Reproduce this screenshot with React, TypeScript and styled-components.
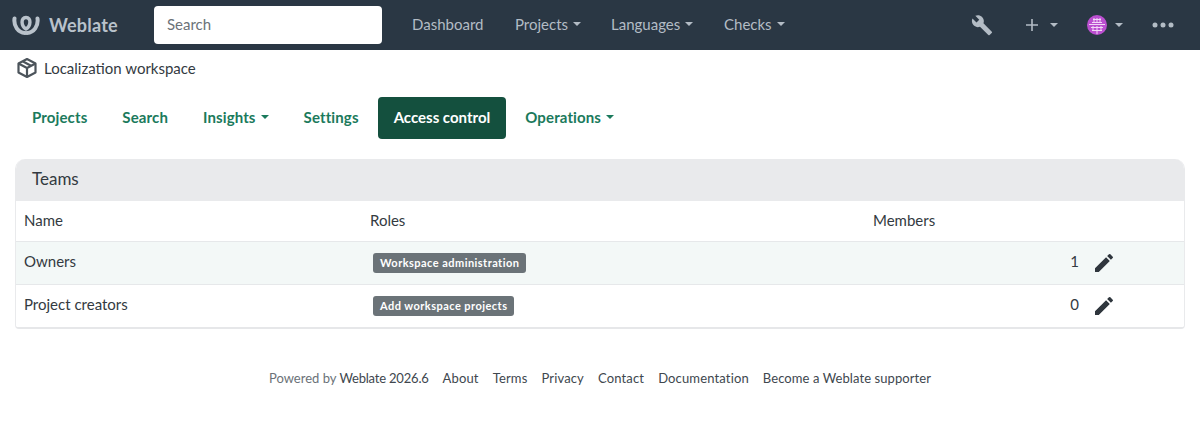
import React from "react";
import styled, { createGlobalStyle } from "styled-components";

const Global = createGlobalStyle`
  html, body { margin: 0; padding: 0; background: #fff; }
  body { font-family: Lato, "Noto Sans", "Liberation Sans", sans-serif; font-size: 15px; color: #333a41; }
`;

const Page = styled.div`
  width: 1200px;
  height: 437px;
  overflow: hidden;
`;

const Navbar = styled.nav`
  display: flex;
  align-items: center;
  height: 50px;
  background: #2a3744;
  padding: 0 26px 0 12px;
  box-sizing: border-box;
`;

const Brand = styled.div`
  display: flex;
  align-items: center;
  gap: 9px;
  width: 142px;
  color: #b9c2cb;
  font-size: 18px;
  font-weight: 700;
  letter-spacing: 0.2px;
`;

const SearchBox = styled.div`
  width: 228px;
  height: 38px;
  box-sizing: border-box;
  background: #fff;
  border-radius: 4px;
  padding: 0 13px 2px;
  display: flex;
  align-items: center;
  color: #6b7278;
  font-size: 15px;
`;

const NavLinks = styled.div`
  display: flex;
  margin-left: 30px;
`;

const NavLink = styled.span<{ $w: number }>`
  display: flex;
  align-items: center;
  gap: 5px;
  width: ${(p) => p.$w}px;
  padding-bottom: 2px;
  color: #b3bcc5;
  font-size: 15px;
`;

const Caret = styled.i<{ $c?: string }>`
  display: inline-block;
  width: 0;
  height: 0;
  border-left: 4px solid transparent;
  border-right: 4px solid transparent;
  border-top: 4px solid ${(p) => p.$c || "#b3bcc5"};
`;

const NavRight = styled.div`
  margin-left: auto;
  display: flex;
  align-items: center;
  color: #b3bcc5;
`;

const IconSlot = styled.span<{ $w: number; $gap?: number }>`
  display: flex;
  align-items: center;
  gap: ${(p) => p.$gap ?? 8}px;
  width: ${(p) => p.$w}px;
`;

const Crumb = styled.div`
  display: flex;
  align-items: center;
  gap: 6px;
  height: 35px;
  padding: 0 0 0 16px;
  font-size: 15px;
  color: #333a41;
`;

const Tabs = styled.div`
  display: flex;
  align-items: center;
  gap: 3px;
  margin: 12px 0 0 16px;
  height: 42px;
`;

const Tab = styled.span<{ $active?: boolean }>`
  display: flex;
  align-items: center;
  gap: 5px;
  height: 42px;
  box-sizing: border-box;
  padding: 0 16px 2px;
  font-size: 15px;
  font-weight: 700;
  letter-spacing: ${(p) => (p.$active ? "0" : "0.12px")};
  border-radius: 4px;
  color: ${(p) => (p.$active ? "#fff" : "#1b7a5c")};
  background: ${(p) => (p.$active ? "#14503e" : "transparent")};
`;

const Panel = styled.section`
  margin: 20px 15px 0;
  border: 1px solid #e9eaec;
  border-top: 0;
  border-bottom: 2px solid #e6e7e9;
  border-radius: 10px 10px 4px 4px;
  overflow: hidden;
`;

const PanelHead = styled.h2`
  margin: 0;
  height: 42px;
  box-sizing: border-box;
  display: flex;
  align-items: center;
  padding: 0 16px 3px;
  background: #e9eaec;
  font-size: 17px;
  font-weight: 400;
  color: #333a41;
`;

const Table = styled.table`
  width: 100%;
  border-collapse: collapse;
  table-layout: fixed;
  font-size: 15px;
`;

const Th = styled.th<{ $w?: number }>`
  height: 40px;
  padding: 0 8px 2px;
  box-sizing: border-box;
  text-align: left;
  font-weight: 400;
  width: ${(p) => (p.$w ? `${p.$w}px` : "auto")};
  border-bottom: 1px solid #e6e8ea;
`;

const Row = styled.tr<{ $tint?: boolean }>`
  background: ${(p) => (p.$tint ? "#f3f8f7" : "#fff")};
`;

const Td = styled.td<{ $last?: boolean }>`
  height: 43px;
  padding: 0 8px 3px;
  box-sizing: border-box;
  border-bottom: ${(p) => (p.$last ? "0" : "1px solid #e6e8ea")};
`;

const Badge = styled.span`
  display: inline-block;
  margin: 3px 0 0 3px;
  padding: 0 7px;
  height: 20px;
  line-height: 20px;
  border-radius: 3px;
  background: #6b7378;
  color: #fff;
  font-size: 11px;
  font-weight: 700;
  letter-spacing: 0.46px;
`;

const Members = styled.div`
  display: flex;
  align-items: center;
  justify-content: flex-end;
  gap: 13px;
  margin-top: 3px;
  padding-right: 60px;
`;

const Count = styled.span`
  margin-top: -3px;
`;

const Footer = styled.footer`
  display: flex;
  justify-content: center;
  gap: 14px;
  margin-top: 41px;
  font-size: 13px;
  letter-spacing: 0.15px;
  color: #40474e;
`;

const Powered = styled.span`
  letter-spacing: 0;
`;

const Version = styled.span`
  letter-spacing: -0.2px;
`;

const Supporter = styled.span`
  letter-spacing: 0.08px;
`;

const Muted = styled.span`
  color: #6b7278;
`;

const Logo = () => (
  <svg width="28" height="20" viewBox="0 0 28 20" fill="none" stroke="#b9c2cb" strokeLinecap="round">
    <path d="M2.500 3.500C1.500 11 6 17.500 13 18" strokeWidth="4" />
    <path d="M25.500 3.500C26.500 11 22 17.500 15 18" strokeWidth="4" />
    <path d="M14 14C9 11 8.500 2.500 14 2.500S19 11 14 14" strokeWidth="3.400" />
  </svg>
);

const Wrench = () => (
  <svg width="22" height="22" viewBox="0 0 24 24" fill="#b3bcc5">
    <path d="M22.700 19.300 13.600 10.200c.9-2.300.4-5-1.500-6.900C10.100 1.300 7.100.9 4.700 2l4.300 4.300-3 3L1.600 5C.4 7.400.9 10.400 2.900 12.400c1.900 1.900 4.600 2.400 6.900 1.500l9.100 9.100c.4.4 1 .4 1.400 0l2.300-2.300c.5-.4.5-1.100.1-1.400z" />
  </svg>
);

const Plus = () => (
  <svg width="14" height="14" viewBox="0 0 14 14" stroke="#b3bcc5" strokeWidth="1.600">
    <path d="M7 1v12M1 7h12" />
  </svg>
);

const Avatar = () => (
  <svg width="20" height="20" viewBox="0 0 20 20">
    <circle cx="10" cy="10" r="10" fill="#bb4fd0" />
    <path
      d="M6 4.500h8M7 3v5M10 3v5M13 3v5M5 7.500h10M2 9.500h16M4 12.500h12M6 11v4M10 11v4M14 11v4M5 15.500h10M10 16v3"
      stroke="#f2d8f7"
      strokeWidth="1"
      fill="none"
    />
  </svg>
);

const Dots = () => (
  <svg width="22" height="6" viewBox="0 0 22 6" fill="#b3bcc5">
    <circle cx="3" cy="3" r="2.500" />
    <circle cx="11" cy="3" r="2.500" />
    <circle cx="19" cy="3" r="2.500" />
  </svg>
);

const Box = () => (
  <svg width="22" height="22" viewBox="0 0 22 22" fill="none" stroke="#4c545b" strokeWidth="2.200" strokeLinejoin="round">
    <path d="M11 2 19.500 6.500v9L11 20l-8.500-4.500v-9L11 2z" />
    <path d="M2.500 6.500 11 11l8.500-4.500M11 11v9M7 4.500l8.500 4.500" />
  </svg>
);

const Pencil = () => (
  <svg width="24" height="24" viewBox="0 0 24 24" fill="#2f363d">
    <path d="M3 17.250V21h3.750L17.810 9.940l-3.750-3.750L3 17.250zM20.710 7.040a1 1 0 0 0 0-1.410l-2.340-2.340a1 1 0 0 0-1.410 0l-1.830 1.830 3.750 3.750 1.830-1.830z" />
  </svg>
);

const teams = [
  { name: "Owners", role: "Workspace administration", count: 1 },
  { name: "Project creators", role: "Add workspace projects", count: 0 },
];

export default function App() {
  return (
    <Page>
      <Global />
      <Navbar>
        <Brand>
          <Logo />
          Weblate
        </Brand>
        <SearchBox>Search</SearchBox>
        <NavLinks>
          <NavLink $w={103}>Dashboard</NavLink>
          <NavLink $w={96}>Projects <Caret /></NavLink>
          <NavLink $w={113}>Languages <Caret /></NavLink>
          <NavLink $w={80}>Checks <Caret /></NavLink>
        </NavLinks>
        <NavRight>
          <IconSlot $w={54}><Wrench /></IconSlot>
          <IconSlot $w={62} $gap={11}><Plus /><Caret /></IconSlot>
          <IconSlot $w={65}><Avatar /><Caret /></IconSlot>
          <Dots />
        </NavRight>
      </Navbar>
      <Crumb>
        <Box />
        Localization workspace
      </Crumb>
      <Tabs>
        <Tab>Projects</Tab>
        <Tab>Search</Tab>
        <Tab>Insights <Caret $c="#1b7a5c" /></Tab>
        <Tab>Settings</Tab>
        <Tab $active>Access control</Tab>
        <Tab>Operations <Caret $c="#1b7a5c" /></Tab>
      </Tabs>
      <Panel>
        <PanelHead>Teams</PanelHead>
        <Table>
          <thead>
            <tr>
              <Th $w={346}>Name</Th>
              <Th $w={503}>Roles</Th>
              <Th>Members</Th>
            </tr>
          </thead>
          <tbody>
            {teams.map((t, i) => (
              <Row key={t.name} $tint={i === 0}>
                <Td $last={i === 1}>{t.name}</Td>
                <Td $last={i === 1}><Badge>{t.role}</Badge></Td>
                <Td $last={i === 1}>
                  <Members><Count>{t.count}</Count><Pencil /></Members>
                </Td>
              </Row>
            ))}
          </tbody>
        </Table>
      </Panel>
      <Footer>
        <Powered><Muted>Powered by</Muted> <Version>Weblate 2026.6</Version></Powered>
        <span>About</span>
        <span>Terms</span>
        <span>Privacy</span>
        <span>Contact</span>
        <span>Documentation</span>
        <Supporter>Become a Weblate supporter</Supporter>
      </Footer>
    </Page>
  );
}
